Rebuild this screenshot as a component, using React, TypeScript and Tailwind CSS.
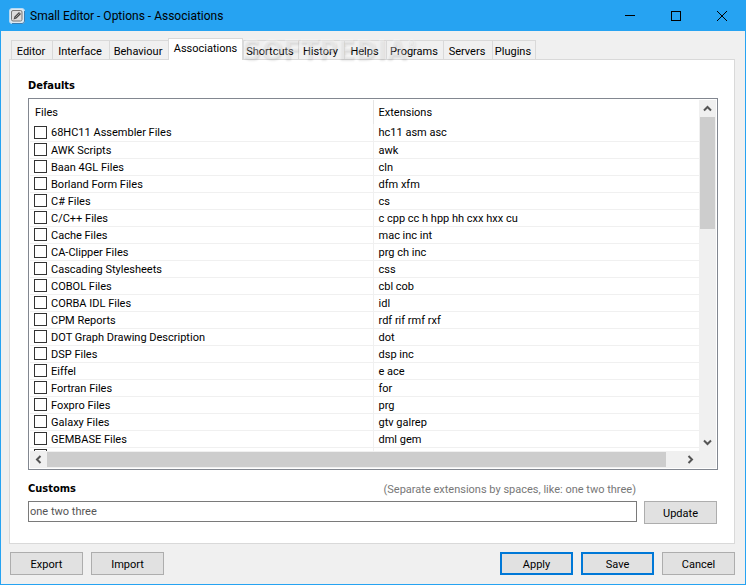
import type { ReactNode } from "react";

const tabs = [
  { name: "Editor", width: "w-[42px]" },
  { name: "Interface", width: "w-[58px]" },
  { name: "Behaviour", width: "w-[60px]" },
  { name: "Associations", width: "w-[75px]" },
  { name: "Shortcuts", width: "w-[56px]" },
  { name: "History", width: "w-[47px]" },
  { name: "Helps", width: "w-[43px]" },
  { name: "Programs", width: "w-[58px]" },
  { name: "Servers", width: "w-[50px]" },
  { name: "Plugins", width: "w-[44px]" },
];

const files: [string, string][] = [
  ["68HC11 Assembler Files", "hc11 asm asc"],
  ["AWK Scripts", "awk"],
  ["Baan 4GL Files", "cln"],
  ["Borland Form Files", "dfm xfm"],
  ["C# Files", "cs"],
  ["C/C++ Files", "c cpp cc h hpp hh cxx hxx cu"],
  ["Cache Files", "mac inc int"],
  ["CA-Clipper Files", "prg ch inc"],
  ["Cascading Stylesheets", "css"],
  ["COBOL Files", "cbl cob"],
  ["CORBA IDL Files", "idl"],
  ["CPM Reports", "rdf rif rmf rxf"],
  ["DOT Graph Drawing Description", "dot"],
  ["DSP Files", "dsp inc"],
  ["Eiffel", "e ace"],
  ["Fortran Files", "for"],
  ["Foxpro Files", "prg"],
  ["Galaxy Files", "gtv galrep"],
  ["GEMBASE Files", "dml gem"],
  ["", ""],
];

function Logo() {
  return (
    <svg width="16" height="16" viewBox="0 0 16 16" className="shrink-0" aria-hidden="true">
      <rect x="0.5" y="0.5" width="15" height="15" rx="2.5" fill="#dce9f3" stroke="#b5d9f3" />
      <path d="M15.5 3V13Q15.5 15.5 13 15.5H3" fill="none" stroke="#3a7cb0" />
      <rect x="2.5" y="2.5" width="10.5" height="10.5" rx="1.5" fill="#dcdcdc" stroke="#777" />
      <path d="M4.5 11.5 5.5 8.5 10 4 12 6 7.5 10.5Z" fill="#4a4a4a" />
      <path d="M6.5 9.5 10.5 5.5" stroke="#bbb" strokeWidth="0.7" />
    </svg>
  );
}

function TitleBar() {
  const control = "flex h-[30px] w-[46px] items-center justify-center";
  return (
    <header className="flex h-[31px] shrink-0 items-center bg-[#26a3f2] pl-2 font-[Roboto,'Segoe_UI',sans-serif] text-xs text-black">
      <Logo />
      <h1 className="ml-[5px] flex-1 whitespace-nowrap">Small Editor - Options - Associations</h1>
      <button type="button" aria-label="Minimize" className={control}>
        <svg width="10" height="10" shapeRendering="crispEdges"><path d="M0 4.5H10" stroke="#000" /></svg>
      </button>
      <button type="button" aria-label="Maximize" className={control}>
        <svg width="10" height="10" shapeRendering="crispEdges"><rect x="0.5" y="0.5" width="9" height="9" fill="none" stroke="#000" /></svg>
      </button>
      <button type="button" aria-label="Close" className={control}>
        <svg width="10" height="10"><path d="M0 0 10 10M10 0 0 10" stroke="#000" /></svg>
      </button>
    </header>
  );
}

function PushButton({ children, primary = false }: { children: ReactNode; primary?: boolean }) {
  const frame = primary ? "border-2 border-[#0078d7]" : "border border-[#adadad]";
  return (
    <button type="button" className={"h-[23px] w-[73px] shrink-0 bg-[#e1e1e1] pt-0.5 " + frame}>
      {children}
    </button>
  );
}

function Chevron({ d }: { d: string }) {
  return (
    <svg width="9" height="9" viewBox="0 0 9 9" aria-hidden="true">
      <path d={d} fill="none" stroke="#555" strokeWidth="2" />
    </svg>
  );
}

function FileTable() {
  return (
    <div className="flex min-h-0 flex-1 flex-col border border-[#828790] p-px">
      <div className="flex min-h-0 flex-1">
        <div className="min-w-0 flex-1 overflow-hidden">
          <table className="w-full table-fixed border-collapse text-left">
            <colgroup>
              <col className="w-[343px]" />
              <col />
            </colgroup>
            <thead>
              <tr className="h-6">
                <th className="border-r border-[#e5e5e5] p-0 pt-0.5 pl-[5px] font-normal">Files</th>
                <th className="p-0 pt-0.5 pl-[5px] font-normal">Extensions</th>
              </tr>
            </thead>
            <tbody>
              {files.map(([name, ext], i) => (
                <tr key={i} className="h-[17px] border-b border-[#f0f0f0]">
                  <td className="border-r border-[#f0f0f0] p-0 pl-1">
                    <label className="flex h-4 items-center gap-1 whitespace-nowrap">
                      <input type="checkbox" aria-label={name || "File type"} className="size-[13px] shrink-0 appearance-none border border-[#333] bg-white" />
                      <span className="pt-0.5">{name}</span>
                    </label>
                  </td>
                  <td className="p-0 pt-0.5 pl-[5px] leading-[14px]">{ext}</td>
                </tr>
              ))}
            </tbody>
          </table>
        </div>
        <div className="flex w-[17px] shrink-0 flex-col items-center bg-[#f0f0f0]">
          <div className="flex h-[17px] items-center"><Chevron d="M1 6.5 4.5 3 8 6.5" /></div>
          <div className="h-28 w-[15px] bg-[#cdcdcd]" />
          <div className="mt-auto flex h-[17px] items-center"><Chevron d="M1 2.5 4.5 6 8 2.5" /></div>
        </div>
      </div>
      <div className="flex h-[17px] shrink-0 items-center bg-[#f0f0f0] pr-[17px]">
        <div className="flex w-[17px] justify-center"><Chevron d="M6.5 1 3 4.5 6.5 8" /></div>
        <div className="h-[15px] flex-1 bg-[#cdcdcd]" />
        <div className="flex w-[33px] justify-end pr-1"><Chevron d="M2.5 1 6 4.5 2.5 8" /></div>
      </div>
    </div>
  );
}

function TabBar() {
  return (
    <nav role="tablist" className="relative flex h-5 items-end pl-[2px]">
      {tabs.map(({ name, width }) => {
        const active = name === "Associations";
        const look = active
          ? "relative -mb-px h-[22px] border-b-0 bg-white pb-px"
          : "-mr-px h-[19px] border-b-0 bg-[#f0f0f0] pt-[3px] pr-0.5 pl-0";
        return (
          <button key={name} type="button" role="tab" aria-selected={active} className={"shrink-0 border border-[#d9d9d9] whitespace-nowrap " + width + " " + look}>
            {name}
          </button>
        );
      })}
      <span aria-hidden="true" className="pointer-events-none absolute -top-[3px] left-[233px] flex items-start font-['DejaVu_Sans',sans-serif] text-[26px] font-bold leading-7 text-white/30 [text-shadow:1px_2px_2px_rgb(0_0_0/0.09)]">
        SOFTPEDIA<sup className="top-0 text-[10px] leading-4">®</sup>
      </span>
    </nav>
  );
}

export default function App() {
  return (
    <div className="flex h-screen flex-col overflow-hidden border-x border-b border-[#26a3f2] bg-[#f0f0f0] font-[Roboto,Tahoma,sans-serif] text-[11px] leading-4 text-black">
      <TitleBar />
      <main className="flex min-h-0 flex-1 flex-col px-2 pt-2 pr-[10px]">
        <TabBar />
        <section className="flex min-h-0 flex-1 flex-col border border-[#d9d9d9] bg-white px-[18px] pt-[18px] pb-[19px] pr-4">
          <h2 className="mb-1 font-['DejaVu_Sans_Condensed',sans-serif] font-bold">Defaults</h2>
          <FileTable />
          <div className="mt-[11px] mb-1 flex h-4 items-center justify-between pr-[82px]">
            <label htmlFor="customs" className="font-['DejaVu_Sans_Condensed',sans-serif] font-bold">Customs</label>
            <span className="pt-0.5 text-[#777]">(Separate extensions by spaces, like: one two three)</span>
          </div>
          <div className="flex items-start gap-[7px] pr-px">
            <input id="customs" defaultValue="one two three" className="h-[21px] min-w-0 flex-1 border border-[#7a7a7a] px-px text-[#555]" />
            <PushButton>Update</PushButton>
          </div>
        </section>
        <footer className="flex shrink-0 gap-2 pt-2 pb-[9px] pl-px">
          <PushButton>Export</PushButton>
          <PushButton>Import</PushButton>
          <span className="flex-1" />
          <PushButton primary>Apply</PushButton>
          <PushButton primary>Save</PushButton>
          <PushButton>Cancel</PushButton>
        </footer>
      </main>
    </div>
  );
}
